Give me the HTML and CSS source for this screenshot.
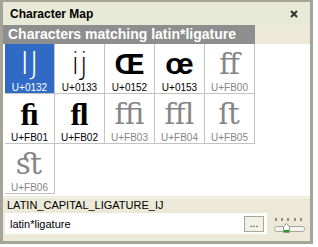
FILE: index.html
```html
<!DOCTYPE html>
<html lang="en">
<head>
    <meta charset="UTF-8">
    <title>Character Map</title>
    <link rel="stylesheet" href="styles.css">
</head>
<body>

<div class="window">
    <div class="titlebar">
        <span>Character Map</span>
        <svg class="close" width="8" height="8" viewBox="0 0 8 8">
            <path d="M1 1L7 7M7 1L1 7" stroke="#333" stroke-width="2"/>
        </svg>
    </div>

    <div class="heading-row">
        <div class="heading">Characters matching latin*ligature</div>
    </div>

    <div class="pane">
        <div class="grid">
            <div class="cell selected"><div class="glyph thin big">&#x0132;</div><div class="code">U+0132</div></div>
            <div class="cell"><div class="glyph thin">&#x0133;</div><div class="code">U+0133</div></div>
            <div class="cell"><div class="glyph heavy">&#x0152;</div><div class="code">U+0152</div></div>
            <div class="cell"><div class="glyph heavy">&#x0153;</div><div class="code">U+0153</div></div>
            <div class="cell missing"><div class="glyph serif">&#xFB00;</div><div class="code">U+FB00</div></div>

            <div class="cell"><div class="glyph serif bold">&#xFB01;</div><div class="code">U+FB01</div></div>
            <div class="cell"><div class="glyph serif bold">&#xFB02;</div><div class="code">U+FB02</div></div>
            <div class="cell missing"><div class="glyph serif">&#xFB03;</div><div class="code">U+FB03</div></div>
            <div class="cell missing"><div class="glyph serif">&#xFB04;</div><div class="code">U+FB04</div></div>
            <div class="cell missing"><div class="glyph serif">&#xFB05;</div><div class="code">U+FB05</div></div>

            <div class="cell missing"><div class="glyph serif">&#xFB06;</div><div class="code">U+FB06</div></div>
        </div>
    </div>

    <div class="status">LATIN_CAPITAL_LIGATURE_IJ</div>

    <div class="search-row">
        <div class="search">
            <span>latin*ligature</span>
            <button class="more">...</button>
        </div>
        <svg class="slider" width="32" height="16" viewBox="0 0 32 16">
            <path d="M3 1v3M9 1v3M15 1v3M22 1v3M28 1v3" stroke="#333" stroke-width="1"/>
            <rect x="1.5" y="9.5" width="30" height="5" rx="2" fill="#f4f3ee" stroke="#a6a6a0"/>
            <path d="M10.5 15.5v-6l3-3l3 3v6z" fill="#fff" stroke="#8a9a8a"/>
            <rect x="11" y="13" width="5" height="2" fill="#21a121"/>
        </svg>
    </div>
</div>

</body>
</html>
```

FILE: styles.css
```css
body {
    margin: 0;
    background-color: #fff;
    font-family: "Liberation Sans", Arial, sans-serif;
}
.window {
    width: 313px;
    height: 244px;
    box-sizing: border-box;
    border: 3px solid #a6a397;
    border-top-width: 2px;
    background-color: #ece9d8;
    display: flex;
    flex-direction: column;
}
.titlebar {
    height: 23px;
    flex-shrink: 0;
    display: flex;
    align-items: center;
    justify-content: space-between;
    padding: 1px 12px 0 7px;
    box-sizing: border-box;
    background-color: #e7ead7;
    font-size: 12px;
    font-weight: bold;
    color: #000;
}
.heading-row {
    height: 19px;
    flex-shrink: 0;
}
.heading {
    width: 252px;
    height: 19px;
    background-color: #8e8e8e;
    color: #fff;
    font-size: 14px;
    font-weight: bold;
    line-height: 19px;
    padding-left: 5px;
    box-sizing: border-box;
}
.pane {
    height: 152px;
    flex-shrink: 0;
    background-color: #fff;
    padding-left: 2px;
    box-sizing: border-box;
}
.grid {
    display: grid;
    grid-template-columns: repeat(5, 50px);
    grid-auto-rows: 50px;
}
.cell {
    box-sizing: border-box;
    border-right: 1px solid #c3c3c3;
    border-bottom: 1px solid #c3c3c3;
    text-align: center;
    color: #000;
}
.cell.selected {
    background-color: #316ac5;
    color: #fff;
}
.cell.missing {
    color: #858585;
}
.glyph {
    height: 36px;
    padding-top: 2px;
    line-height: 36px;
    font-size: 30px;
    font-family: "DejaVu Sans", sans-serif;
}
.glyph.thin {
    font-weight: 200;
}
.glyph.big {
    font-size: 32px;
    height: 37px;
    padding-top: 1px;
}
.glyph.heavy {
    font-family: "Liberation Sans", Arial, sans-serif;
    font-weight: bold;
}
.glyph.serif {
    font-family: "Liberation Serif", "DejaVu Serif", serif;
    font-size: 29px;
}
.glyph.serif.bold {
    font-weight: bold;
    font-size: 32px;
}
.code {
    font-size: 10px;
    line-height: 12px;
}
.status {
    margin-top: 1px;
    height: 16px;
    flex-shrink: 0;
    border-top: 1px solid #f7f6ef;
    padding-left: 4px;
    font-size: 11px;
    line-height: 15px;
    box-sizing: border-box;
}
.search-row {
    flex: 1;
    display: flex;
    align-items: flex-start;
    padding: 0 5px 0 2px;
    gap: 6px;
}
.search {
    flex: 1;
    height: 21px;
    background-color: #fff;
    display: flex;
    align-items: center;
    justify-content: space-between;
    padding: 0 3px 0 5px;
    font-size: 11px;
}
.more {
    width: 20px;
    height: 16px;
    padding: 0;
    margin: 0;
    border: 1px solid #a8a79c;
    background-color: #f2f1e8;
    font-family: "Liberation Sans", Arial, sans-serif;
    font-size: 10px;
    line-height: 10px;
}
.slider {
    display: block;
    margin-top: 4px;
}
```
